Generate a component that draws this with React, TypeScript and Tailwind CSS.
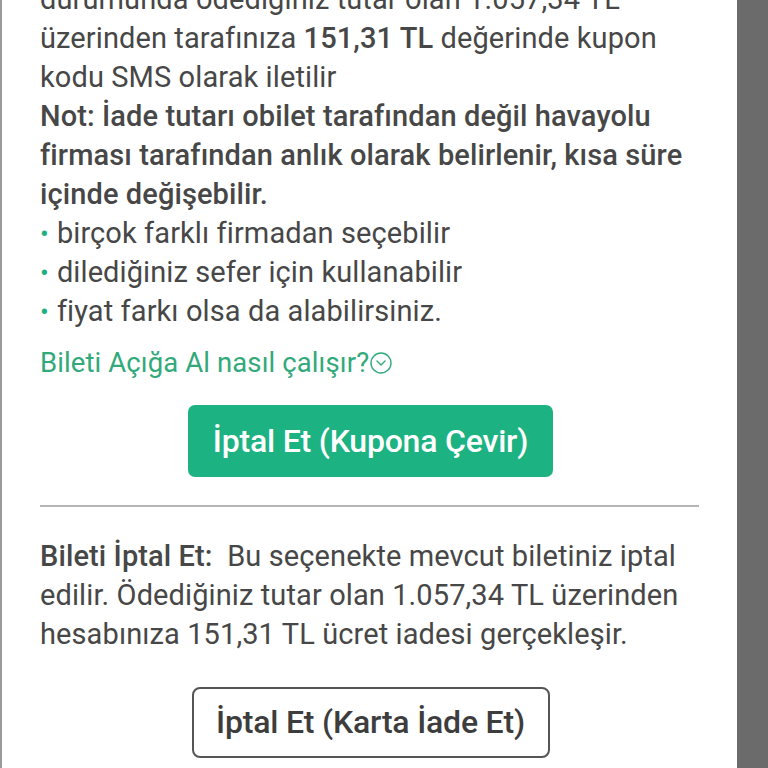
import { CircleChevronDown } from 'lucide-react'

const font = { fontFamily: 'Roboto, "Noto Sans", sans-serif' }

const bullets = ['birçok farklı firmadan seçebilir', 'dilediğiniz sefer için kullanabilir', 'fiyat farkı olsa da alabilirsiniz.']

export default function App() {
  return (
    <div className="flex h-[768px] w-[768px] overflow-hidden bg-[#6b6b6b]" style={font}>
      <div className="h-full w-[737px] shrink-0 overflow-hidden border-l-2 border-[#9a9a9a] bg-white">
        <div className="-mt-[20px] pl-[38px] pr-[20px] text-[29px] leading-[39px] tracking-[0.1px] text-[#474747]">
          <p className="whitespace-nowrap">
            durumunda ödediğiniz tutar olan 1.057,34 TL
            <br />
            üzerinden tarafınıza <span className="font-medium">151,31 TL</span> değerinde kupon
            <br />
            kodu SMS olarak iletilir
          </p>
          <p className="whitespace-nowrap font-medium">
            Not: İade tutarı obilet tarafından değil havayolu
            <br />
            firması tarafından anlık olarak belirlenir, kısa süre
            <br />
            içinde değişebilir.
          </p>
          <ul>
            {bullets.map((t) => (
              <li key={t} className="h-[39px] whitespace-nowrap">
                <span className="mr-[8px] inline-block text-[26px] leading-[39px] text-[#1fae7e]">•</span>
                {t}
              </li>
            ))}
          </ul>
          <div className="mt-[12px] flex h-[39px] items-center whitespace-nowrap text-[27.5px] text-[#32a97a]">
            Bileti Açığa Al nasıl çalışır?
            <CircleChevronDown className="h-[24px] w-[24px] shrink-0" strokeWidth={1.4} />
          </div>
          <div className="mt-[23px] flex justify-center pr-[16px]">
            <button className="h-[72px] w-[365px] rounded-[7px] bg-[#1cb281] text-[32px] font-medium tracking-[-0.2px] text-white">
              İptal Et (Kupona Çevir)
            </button>
          </div>
          <div className="mr-[18px] mt-[28px] h-[2px] bg-[#b5b5b5]" />
          <p className="mt-[30px] whitespace-nowrap">
            <span className="font-medium">Bileti İptal Et:</span>&nbsp; Bu seçenekte mevcut biletiniz iptal
            <br />
            edilir. Ödediğiniz tutar olan 1.057,34 TL üzerinden
            <br />
            hesabınıza 151,31 TL ücret iadesi gerçekleşir.
          </p>
          <div className="mt-[33px] flex justify-center pr-[16px]">
            <button className="h-[71px] w-[358px] rounded-[8px] border-2 border-[#555] bg-white text-[32px] font-medium tracking-[-0.2px] text-[#3d3d3d]">
              İptal Et (Karta İade Et)
            </button>
          </div>
        </div>
      </div>
    </div>
  )
}
